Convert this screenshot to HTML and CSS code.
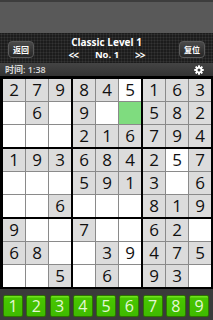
FILE: index.html
```html
<!DOCTYPE html>
<html>
<head>
<meta charset="utf-8">
<link rel="stylesheet" href="styles.css">
</head>
<body>
<div class="app">
  <div class="status"></div>
  <div class="header">
    <div class="btn back">返回</div>
    <div class="center">
      <div class="title">Classic Level 1</div>
      <div class="nav"><span class="arr">&lt;&lt;</span><span class="no">No. 1</span><span class="arr">&gt;&gt;</span></div>
    </div>
    <div class="btn reset">复位</div>
  </div>
  <div class="timebar">
    <span class="time">时间: 1:38</span>
    <svg class="gear" width="10" height="10" viewBox="0 0 20 20"><g fill="#fff"><circle cx="10" cy="10" r="6.5"/><rect x="8" y="0.5" width="4" height="19" rx="1"/><rect x="0.5" y="8" width="19" height="4" rx="1"/><rect x="8" y="0.5" width="4" height="19" rx="1" transform="rotate(45 10 10)"/><rect x="8" y="0.5" width="4" height="19" rx="1" transform="rotate(-45 10 10)"/></g><circle cx="10" cy="10" r="3" fill="#3a3a3a"/></svg>
  </div>
  <div class="board">
    <div class="box">
      <div class="c g">2</div><div class="c g">7</div><div class="c g">9</div>
      <div class="c"></div><div class="c g">6</div><div class="c"></div>
      <div class="c"></div><div class="c"></div><div class="c"></div>
    </div>
    <div class="box">
      <div class="c g">8</div><div class="c g">4</div><div class="c">5</div>
      <div class="c g">9</div><div class="c"></div><div class="c sel"></div>
      <div class="c g">2</div><div class="c g">1</div><div class="c g">6</div>
    </div>
    <div class="box">
      <div class="c g">1</div><div class="c g">6</div><div class="c g">3</div>
      <div class="c g">5</div><div class="c g">8</div><div class="c g">2</div>
      <div class="c g">7</div><div class="c g">9</div><div class="c g">4</div>
    </div>
    <div class="box">
      <div class="c g">1</div><div class="c g">9</div><div class="c g">3</div>
      <div class="c"></div><div class="c"></div><div class="c"></div>
      <div class="c"></div><div class="c"></div><div class="c g">6</div>
    </div>
    <div class="box">
      <div class="c g">6</div><div class="c g">8</div><div class="c g">4</div>
      <div class="c g">5</div><div class="c g">9</div><div class="c g">1</div>
      <div class="c"></div><div class="c"></div><div class="c"></div>
    </div>
    <div class="box">
      <div class="c g">2</div><div class="c">5</div><div class="c g">7</div>
      <div class="c g">3</div><div class="c"></div><div class="c g">6</div>
      <div class="c g">8</div><div class="c g">1</div><div class="c g">9</div>
    </div>
    <div class="box">
      <div class="c g">9</div><div class="c"></div><div class="c"></div>
      <div class="c g">6</div><div class="c g">8</div><div class="c"></div>
      <div class="c"></div><div class="c"></div><div class="c g">5</div>
    </div>
    <div class="box">
      <div class="c g">7</div><div class="c"></div><div class="c"></div>
      <div class="c"></div><div class="c g">3</div><div class="c">9</div>
      <div class="c"></div><div class="c g">6</div><div class="c"></div>
    </div>
    <div class="box">
      <div class="c g">6</div><div class="c g">2</div><div class="c"></div>
      <div class="c g">4</div><div class="c g">7</div><div class="c g">5</div>
      <div class="c g">9</div><div class="c g">3</div><div class="c"></div>
    </div>
  </div>
  <div class="numbar">
    <div class="nb">1</div><div class="nb">2</div><div class="nb">3</div>
    <div class="nb">4</div><div class="nb">5</div><div class="nb">6</div>
    <div class="nb">7</div><div class="nb">8</div><div class="nb">9</div>
  </div>
</div>
</body>
</html>
```
FILE: styles.css
```css
html, body {
  margin: 0;
  padding: 0;
  background: #000;
}
.app {
  width: 213px;
  height: 320px;
  overflow: hidden;
  font-family: "Open Sans", "Noto Sans", "Noto Sans CJK SC", sans-serif;
}
.status {
  height: 33px;
  background: #595959;
  border-top: 2px solid #3d3d3d;
  box-sizing: border-box;
}
.header {
  height: 30px;
  background-color: #1c1c1c;
  background-image: radial-gradient(circle, #343434 0.9px, transparent 1.1px);
  background-size: 3px 3px;
  display: flex;
  align-items: center;
  justify-content: space-between;
  padding: 0 8px;
  box-sizing: border-box;
}
.btn {
  width: 26px;
  height: 17px;
  border-radius: 4px;
  background: linear-gradient(#4a4a4a, #252525);
  border: 1px solid #5a5a5a;
  box-sizing: border-box;
  color: #fff;
  font-size: 8px;
  font-weight: bold;
  display: flex;
  align-items: center;
  justify-content: center;
  margin-top: 2px;
}
.center {
  display: flex;
  flex-direction: column;
  align-items: center;
  gap: 2px;
  color: #fff;
  font-weight: bold;
}
.title {
  font-size: 10px;
  line-height: 11px;
}
.nav {
  display: flex;
  align-items: center;
  font-size: 9.5px;
  line-height: 10px;
}
.arr {
  font-size: 10px;
  letter-spacing: -1px;
}
.no {
  margin: 0 16px 0 17px;
}
.timebar {
  height: 13px;
  background: linear-gradient(#444, #333);
  display: flex;
  align-items: center;
  justify-content: space-between;
  padding: 0 9px 0 5px;
}
.time {
  color: #dcdcdc;
  font-size: 9px;
  font-weight: 600;
  line-height: 13px;
}
.gear {
  display: block;
}
.board {
  display: grid;
  grid-template-columns: repeat(3, 68px);
  grid-template-rows: repeat(3, 68px);
  gap: 2px;
  padding: 3px 2px 2px 3px;
  background: #000;
}
.box {
  display: grid;
  grid-template-columns: repeat(3, 22px);
  grid-template-rows: repeat(3, 22px);
  gap: 1px;
  background: #8a8a8a;
}
.c {
  background: #fff;
  color: #111;
  font-size: 17px;
  line-height: 22px;
  text-align: center;
}
.c.g {
  background: #dcdcdc;
}
.c.sel {
  background: #7fdc7f;
}
.numbar {
  height: 31px;
  background: #3a3a3a;
  display: flex;
  justify-content: space-between;
  padding: 6px 4px 0 3px;
  box-sizing: border-box;
}
.nb {
  width: 20px;
  height: 22px;
  box-sizing: border-box;
  border: 1px solid #2c7400;
  border-radius: 2px;
  background: linear-gradient(#6ee21c 0, #6ee21c 1px, #48c600 2px, #3fba00 100%);
  color: #e4f8d4;
  font-size: 16px;
  line-height: 20px;
  text-align: center;
}
```
